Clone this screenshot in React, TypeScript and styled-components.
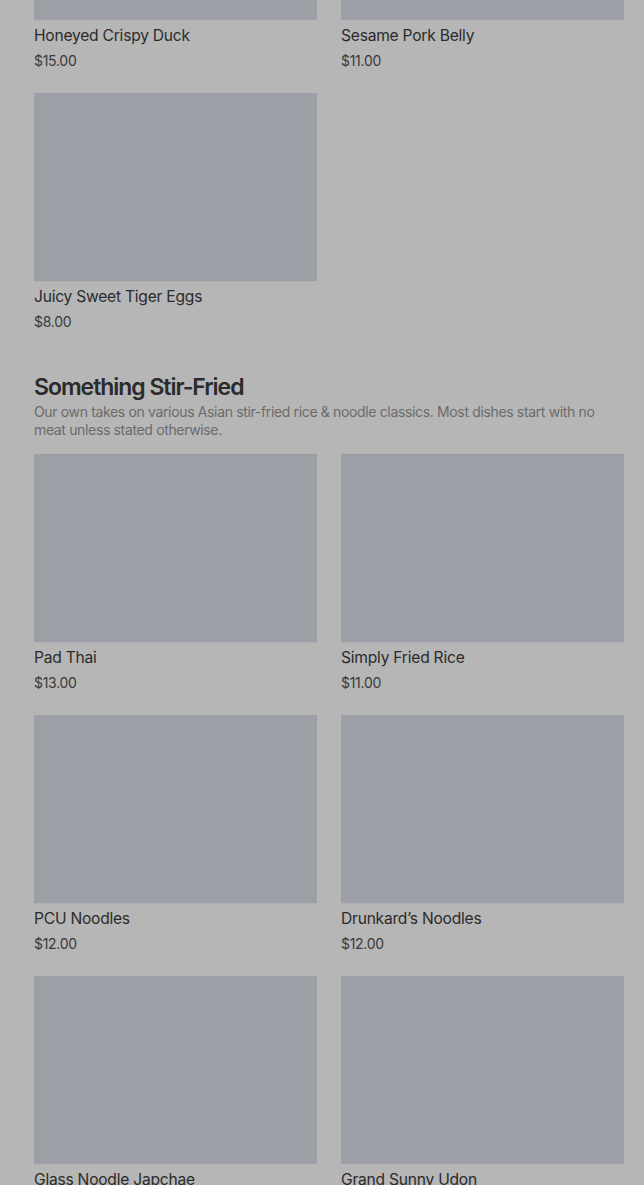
import React from "react";
import styled, { createGlobalStyle } from "styled-components";

const Global = createGlobalStyle`
  html, body { margin: 0; padding: 0; background: #b6b6b6; }
  body { font-family: Inter, "Noto Sans", "Liberation Sans", sans-serif; -webkit-font-smoothing: antialiased; }
`;

const Page = styled.main`
  padding: 0 20px 40px 34px;
  margin-top: -168px;
  background: #b6b6b6;
  display: flex;
  flex-direction: column;
  gap: 41px;
`;

const Section = styled.section`
  display: flex;
  flex-direction: column;
`;

const SectionHeader = styled.header`
  display: flex;
  flex-direction: column;
  gap: 1px;
  margin-bottom: 15px;
`;

const Title = styled.h2`
  margin: 0;
  font-size: 23px;
  line-height: 30px;
  font-weight: 600;
  letter-spacing: -0.045em;
  color: #2b2b2b;
`;

const Description = styled.p`
  margin: 0;
  font-size: 14px;
  line-height: 18px;
  font-weight: 400;
  letter-spacing: -0.025em;
  color: #6b6b6b;
  max-width: 580px;
`;

const Grid = styled.div`
  display: grid;
  grid-template-columns: 283px 283px;
  column-gap: 24px;
  row-gap: 23px;
`;

const Card = styled.article`
  display: flex;
  flex-direction: column;
`;

const Thumb = styled.div`
  height: 188px;
  background: #9c9fa5;
  box-shadow: 0 1px 0 #aeb0b4;
`;

const Name = styled.h3`
  margin: 6px 0 0;
  font-size: 15.6px;
  line-height: 20px;
  font-weight: 400;
  letter-spacing: -0.015em;
  color: #2b2b2b;
`;

const Price = styled.span`
  margin-top: 6px;
  font-size: 14px;
  line-height: 18px;
  font-weight: 400;
  letter-spacing: -0.02em;
  color: #3a3a3a;
`;

type Item = { name: string; price: string };

const previous: Item[] = [
  { name: "Honeyed Crispy Duck", price: "$15.00" },
  { name: "Sesame Pork Belly", price: "$11.00" },
  { name: "Juicy Sweet Tiger Eggs", price: "$8.00" },
];

const stirFried: Item[] = [
  { name: "Pad Thai", price: "$13.00" },
  { name: "Simply Fried Rice", price: "$11.00" },
  { name: "PCU Noodles", price: "$12.00" },
  { name: "Drunkard’s Noodles", price: "$12.00" },
  { name: "Glass Noodle Japchae", price: "$13.00" },
  { name: "Grand Sunny Udon", price: "$13.00" },
];

const Dish = ({ item }: { item: Item }) => (
  <Card>
    <Thumb />
    <Name>{item.name}</Name>
    <Price>{item.price}</Price>
  </Card>
);

export default function App() {
  return (
    <>
      <Global />
      <Page>
        <Section>
          <Grid>
            {previous.map((i) => (
              <Dish key={i.name} item={i} />
            ))}
          </Grid>
        </Section>
        <Section>
          <SectionHeader>
            <Title>Something Stir-Fried</Title>
            <Description>
              Our own takes on various Asian stir-fried rice &amp; noodle classics. Most dishes start with no
              meat unless stated otherwise.
            </Description>
          </SectionHeader>
          <Grid>
            {stirFried.map((i) => (
              <Dish key={i.name} item={i} />
            ))}
          </Grid>
        </Section>
      </Page>
    </>
  );
}
